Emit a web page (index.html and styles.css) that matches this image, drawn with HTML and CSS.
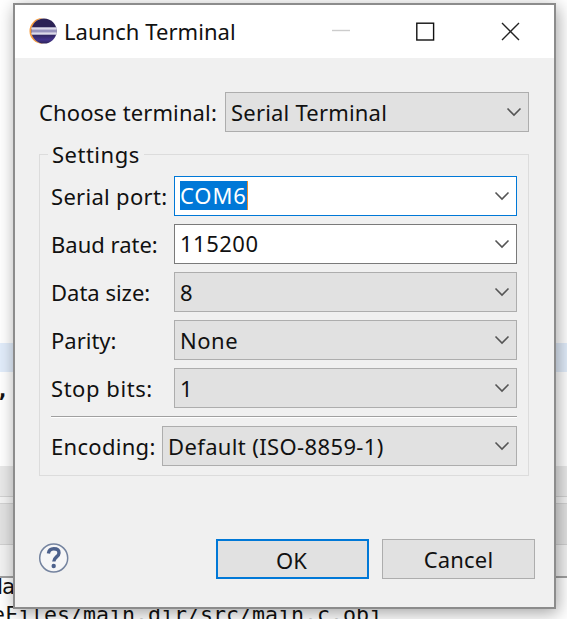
FILE: index.html
```html
<!DOCTYPE html>
<html lang="en">
<head>
<meta charset="utf-8">
<title>Launch Terminal</title>
<link rel="stylesheet" href="styles.css">
</head>
<body>
<div class="workspace">
  <div class="editor"></div>
  <div class="current-line"></div>
  <div class="editor code">,</div>
  <div class="scrollbar"></div>
  <div class="sash"></div>
  <div class="tabs"></div>
  <div class="toolbar"></div>
  <div class="console"><div class="first">Ma</div><div>eFiles/main.dir/src/main.c.obj</div></div>
</div>
<div class="dialog">
  <header class="titlebar">
    <svg class="logo" width="28" height="28" viewBox="0 0 28 28">
      <defs><linearGradient id="sphere" x1="0" y1="0" x2="0" y2="1"><stop offset="0" stop-color="#2c2255"/><stop offset=".6" stop-color="#2c2255"/><stop offset=".85" stop-color="#43348c"/><stop offset="1" stop-color="#2c2255"/></linearGradient></defs>
      <circle cx="13.4" cy="14" r="12.9" fill="#f79a38"/>
      <circle cx="15.8" cy="14" r="13" fill="#fff"/>
      <circle cx="15" cy="14" r="12.6" fill="url(#sphere)"/>
      <path d="M2.6 10.2h25v7.6h-25z" fill="#b5b1cf"/>
      <path d="M2.4 11.6h25.2M2.4 16.4h25.2" stroke="#dddbe9" stroke-width="1.5"/>
      <path d="M2.4 14h25.2" stroke="#8680b2" stroke-width="1.2"/>
    </svg>
    <h1 class="t-title">Launch Terminal</h1>
    <svg class="controls" width="190" height="20" viewBox="0 0 190 20" fill="none">
      <path d="M0 9.5h18" stroke="#ccc" stroke-width="1.4"/>
      <rect x="84.8" y="2.2" width="16.8" height="16.8" stroke="#111" stroke-width="1.4"/>
      <path d="M170 2l17 17M187 2l-17 17" stroke="#222" stroke-width="1.4"/>
    </svg>
  </header>
  <main class="body">
    <div class="row chooser"><label class="t-choose">Choose terminal:</label><div class="combo"><span class="t-serial">Serial Terminal</span><svg class="chev" viewBox="0 0 16 10"><path d="M1.5 1.5L8 8l6.5-6.5"/></svg></div></div>
    <section class="group">
      <h2 class="legend"><span class="t-settings">Settings</span></h2>
      <div class="row"><label class="t-port">Serial port:</label><div class="combo edit focus"><span class="t-com selected">COM6</span><svg class="chev" viewBox="0 0 16 10"><path d="M1.5 1.5L8 8l6.5-6.5"/></svg></div></div>
      <div class="row"><label>Baud rate:</label><div class="combo edit"><span class="t-rate">115200</span><svg class="chev" viewBox="0 0 16 10"><path d="M1.5 1.5L8 8l6.5-6.5"/></svg></div></div>
      <div class="row"><label>Data size:</label><div class="combo"><span>8</span><svg class="chev" viewBox="0 0 16 10"><path d="M1.5 1.5L8 8l6.5-6.5"/></svg></div></div>
      <div class="row"><label>Parity:</label><div class="combo"><span class="t-none">None</span><svg class="chev" viewBox="0 0 16 10"><path d="M1.5 1.5L8 8l6.5-6.5"/></svg></div></div>
      <div class="row"><label class="t-stop">Stop bits:</label><div class="combo"><span>1</span><svg class="chev" viewBox="0 0 16 10"><path d="M1.5 1.5L8 8l6.5-6.5"/></svg></div></div>
      <div class="separator"></div>
      <div class="row encoding"><label class="t-enc">Encoding:</label><div class="combo"><span class="t-default">Default (ISO-8859-1)</span><svg class="chev" viewBox="0 0 16 10"><path d="M1.5 1.5L8 8l6.5-6.5"/></svg></div></div>
    </section>
    <footer class="footer">
      <svg class="help" width="32" height="32" viewBox="0 0 32 32" fill="none">
        <circle cx="15.7" cy="16" r="14" fill="#f6f6f7" stroke="#74839f" stroke-width="1.5"/>
        <path d="M10.4 11.4c.5-3.2 2.5-4.6 5.4-4.6 3.2 0 5.2 1.6 5.2 4.1 0 3.9-5.2 4.2-5.2 8.7" stroke="#4d618c" stroke-width="3.4"/>
        <circle cx="15.7" cy="24" r="2.2" fill="#4d618c"/>
      </svg>
      <button class="btn primary"><span>OK</span></button>
      <button class="btn"><span class="t-cancel">Cancel</span></button>
    </footer>
  </main>
</div>
</body>
</html>
```
FILE: styles.css
```css
* { box-sizing: border-box; }
body { margin: 0; width: 567px; height: 619px; overflow: hidden; font: 22px/38px "Noto Sans", "Open Sans", sans-serif; color: #111; }
h1, h2 { margin: 0; font: inherit; }

.workspace { display: grid; grid-template-rows: 343px 29px 94px 30px 8px 41px 31px 43px; height: 619px; background: #fff; }
.current-line { background: #e2edfb; }
.code { font: bold 22px/36px "DejaVu Sans Mono", monospace; margin-left: -4px; }
.scrollbar { background: #e9e9e9; }
.sash { background: #f3f3f3; border: solid #d2d2d2; border-width: 1px 0; }
.tabs { background: #e2e2e2; border-bottom: 1px solid #d0d0d0; }
.toolbar { background: #f2f2f2; }
.console { border-top: 2px solid #a0a0a0; font: 21.6px/29px "DejaVu Sans Mono", monospace; white-space: pre; overflow: hidden; }
.console div { margin-left: -8px; }
.console .first { margin-left: -11px; height: 22px; line-height: 17px; }

.dialog { position: absolute; left: 13px; top: 3px; width: 543px; height: 606px; border: 2px solid #8c8c8c; background: #f0f0f0; box-shadow: 2px 4px 16px rgba(0,0,0,.36); }
.titlebar { display: flex; align-items: center; height: 53px; padding-left: 14px; background: #fff; }
.titlebar h1 { margin: -2px 0 0 7px; letter-spacing: .05px; }
.logo { margin-top: -1px; }
.controls { margin: -2px 32px 0 auto; }

.body { padding: 34px 25px 0 24px; }
.row { display: flex; justify-content: space-between; height: 40px; }
.row label { white-space: nowrap; line-height: 40px; }
.combo { display: flex; align-items: center; justify-content: space-between; width: 343px; height: 40px; padding: 0 6px 0 5px; border: 1px solid #adadad; background: #e1e1e1; white-space: nowrap; }
.combo span { margin-top: -1px; }
.chooser .combo { width: 304px; }
.encoding .combo { width: 355px; }
.edit { background: #fff; border-color: #7a7a7a; }
.edit span { margin-top: -2px; }
.focus { border: 1.5px solid #0078d7; }
.combo .selected { height: 29px; line-height: 28px; margin-top: -2px; background: #0078d7; color: #fff; border-right: 1px solid #e78a2c; }
.chev { width: 16px; height: 10px; fill: none; stroke: #555; stroke-width: 1.6; }

.group { display: flex; flex-direction: column; gap: 8px; height: 322px; margin-top: 22px; padding: 0 11px; border: 1px solid #dcdcdc; }
.legend { height: 13px; margin-left: -3px; }
.legend span { display: block; width: max-content; padding: 0 4px; line-height: 26px; margin-top: -14px; background: #f0f0f0; }
.separator { height: 2px; background: #a0a0a0; border-bottom: 1px solid #fff; }

.t-choose { letter-spacing: .12px; }
.t-serial { letter-spacing: .2px; }
.t-settings { letter-spacing: .5px; }
.t-port { letter-spacing: .3px; }
.t-com { letter-spacing: .9px; }
.t-rate { letter-spacing: .5px; }
.t-none { letter-spacing: .5px; }
.t-stop { letter-spacing: .55px; }
.t-enc { letter-spacing: .3px; }
.t-default { letter-spacing: .37px; }
.t-cancel { letter-spacing: .2px; }

.footer { display: flex; align-items: center; margin: 63px -6px 0 0; }
.help { margin: -2px auto 0 -1px; }
.btn { width: 153px; height: 40px; margin: 0 0 0 13px; padding: 0 0 2px; border: 1px solid #adadad; background: #e1e1e1; color: #111; font: inherit; }
.btn + .btn { margin-left: 13px; }
.primary { border: 3px solid #0078d7; border-width: 2.5px; padding-right: 2px; }
```
